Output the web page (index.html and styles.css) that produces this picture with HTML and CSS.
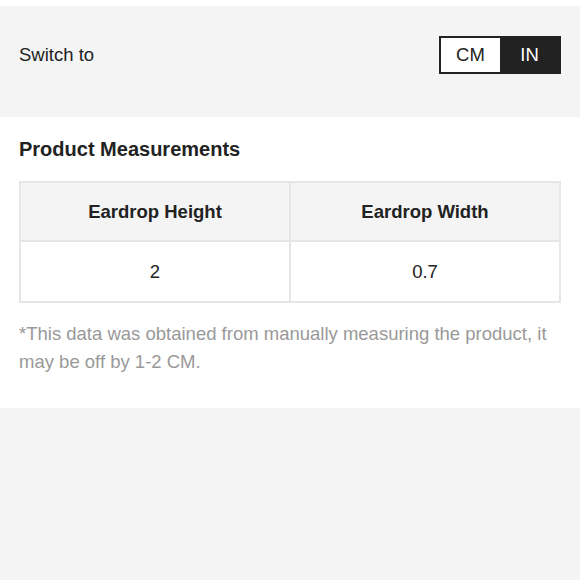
FILE: index.html
```html
<!DOCTYPE html>
<html>
<head>
<meta charset="utf-8">
<link rel="stylesheet" href="styles.css">
</head>
<body>
<div class="top-gap"></div>
<section class="switch-bar">
  <span class="switch-label">Switch to</span>
  <div class="toggle">
    <span class="opt">CM</span>
    <span class="opt active">IN</span>
  </div>
</section>
<section class="measure">
  <h2 class="title">Product Measurements</h2>
  <table class="mtable">
    <thead>
      <tr><th>Eardrop Height</th><th>Eardrop Width</th></tr>
    </thead>
    <tbody>
      <tr><td>2</td><td>0.7</td></tr>
    </tbody>
  </table>
  <p class="note">*This data was obtained from manually measuring the product, it may be off by 1-2 CM.</p>
</section>
<div class="bottom-fill"></div>
</body>
</html>
```
FILE: styles.css
```css
html, body {
  margin: 0;
  padding: 0;
  background: #ffffff;
  font-family: "Liberation Sans", Arial, sans-serif;
  color: #222222;
}
.top-gap {
  height: 6px;
  background: #ffffff;
}
.switch-bar {
  background: #f4f4f4;
  height: 111px;
  box-sizing: border-box;
  padding: 30px 19px 0 19px;
  display: flex;
  justify-content: space-between;
  align-items: flex-start;
}
.switch-label {
  font-size: 18.5px;
  line-height: 38px;
  color: #222;
}
.toggle {
  display: flex;
  border: 2px solid #222;
  height: 38px;
  box-sizing: border-box;
}
.opt {
  width: 59px;
  display: flex;
  align-items: center;
  justify-content: center;
  font-size: 18.5px;
  background: #fff;
  color: #222;
}
.opt.active {
  background: #222;
  color: #fff;
}
.measure {
  background: #fff;
  padding: 20px 19px 0 19px;
  height: 291px;
  box-sizing: border-box;
}
.title {
  margin: 0;
  font-size: 20px;
  line-height: 24px;
  font-weight: bold;
  color: #222;
}
.mtable {
  margin-top: 20px;
  width: 100%;
  border-collapse: collapse;
  table-layout: fixed;
}
.mtable th, .mtable td {
  border: 2px solid #e6e6e6;
  text-align: center;
  font-size: 18.5px;
  color: #222;
}
.mtable th {
  background: #f4f4f4;
  height: 57px;
  font-weight: bold;
  padding: 0;
}
.mtable td {
  height: 59px;
  padding: 0;
}
.note {
  margin: 17px 0 0 0;
  font-size: 18.5px;
  line-height: 28px;
  color: #999;
}
.bottom-fill {
  background: #f4f4f4;
  height: 172px;
}
```
